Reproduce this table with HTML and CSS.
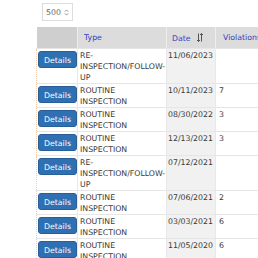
FILE: index.html
```html
<!DOCTYPE html>
<html>
<head>
<meta charset="utf-8">
<link rel="stylesheet" href="styles.css">
</head>
<body>
<div class="page">
  <div class="toolbar">
    <div class="select">500 <svg class="chev" width="5" height="7" viewBox="0 0 5 7"><path d="M0.8 2.6 L2.5 0.9 L4.2 2.6 M0.8 4.4 L2.5 6.1 L4.2 4.4" fill="none" stroke="#888" stroke-width="0.9"/></svg></div>
  </div>
  <table class="grid">
    <colgroup>
      <col class="w-btn"><col class="w-type"><col class="w-date"><col class="w-viol">
    </colgroup>
    <thead>
      <tr>
        <th class="c-btn"></th>
        <th class="c-type"><a>Type</a></th>
        <th class="c-date"><a>Date</a><svg class="sort" width="6" height="9" viewBox="0 0 6 9"><path d="M1.5 0.5 V8.5 M0 7 L1.5 8.5 L3 7 M4.5 8.5 V0.5 M3 2 L4.5 0.5 L6 2" fill="none" stroke="#555" stroke-width="1"/></svg></th>
        <th class="c-viol"><a>Violations</a></th>
      </tr>
    </thead>
    <tbody>
      <tr><td class="c-btn"><span class="btn">Details</span></td><td class="c-type">RE-<br>INSPECTION/FOLLOW-<br>UP</td><td class="c-date">11/06/2023</td><td class="c-viol"></td></tr>
      <tr><td class="c-btn"><span class="btn">Details</span></td><td class="c-type">ROUTINE<br>INSPECTION</td><td class="c-date">10/11/2023</td><td class="c-viol">7</td></tr>
      <tr><td class="c-btn"><span class="btn">Details</span></td><td class="c-type">ROUTINE<br>INSPECTION</td><td class="c-date">08/30/2022</td><td class="c-viol">3</td></tr>
      <tr><td class="c-btn"><span class="btn">Details</span></td><td class="c-type">ROUTINE<br>INSPECTION</td><td class="c-date">12/13/2021</td><td class="c-viol">3</td></tr>
      <tr><td class="c-btn"><span class="btn">Details</span></td><td class="c-type">RE-<br>INSPECTION/FOLLOW-<br>UP</td><td class="c-date">07/12/2021</td><td class="c-viol"></td></tr>
      <tr><td class="c-btn"><span class="btn">Details</span></td><td class="c-type">ROUTINE<br>INSPECTION</td><td class="c-date">07/06/2021</td><td class="c-viol">2</td></tr>
      <tr><td class="c-btn"><span class="btn">Details</span></td><td class="c-type">ROUTINE<br>INSPECTION</td><td class="c-date">03/03/2021</td><td class="c-viol">6</td></tr>
      <tr><td class="c-btn"><span class="btn">Details</span></td><td class="c-type">ROUTINE<br>INSPECTION</td><td class="c-date">11/05/2020</td><td class="c-viol">6</td></tr>
    </tbody>
  </table>
</div>
</body>
</html>
```
FILE: styles.css
```css
html, body {
  margin: 0;
  padding: 0;
  overflow: hidden;
  background: #fff;
}
.page {
  width: 320px;
  font-family: "DejaVu Sans", Verdana, sans-serif;
  font-size: 7.8px;
  color: #3a3a3a;
}
.toolbar {
  padding: 3px 0 0 42px;
  height: 27px;
  box-sizing: border-box;
}
.select {
  display: inline-flex;
  align-items: center;
  gap: 3px;
  height: 18px;
  padding: 0 3px 0 3px;
  border: 1px solid #ddd;
  box-sizing: border-box;
  color: #666;
  font-size: 7.8px;
}
.grid {
  margin-left: 36px;
  border-collapse: collapse;
  table-layout: fixed;
  width: 240px;
}
.w-btn { width: 41px; }
.w-type { width: 89px; }
.w-date { width: 49px; }
.w-viol { width: 61px; }
.grid th {
  height: 21px;
  padding: 0 0 0 6px;
  text-align: left;
  font-weight: normal;
  background: #dcdcdc;
  vertical-align: middle;
  white-space: nowrap;
  border-left: 1px solid #eee;
  overflow: hidden;
}
.grid th a {
  color: #3b3bc0;
}
.grid th.c-btn {
  background: #cfcfcf;
  border-left: none;
}
.grid th.c-date {
  padding-left: 5px;
}
.grid th.c-viol {
  padding-left: 7px;
}
.sort {
  margin-left: 6px;
  vertical-align: -1px;
}
.grid td {
  vertical-align: top;
  line-height: 11px;
  padding: 1px 0 0 2px;
  border-top: 1px solid #e6e6e6;
  border-left: 1px solid #e8e8e8;
  height: 22px;
  white-space: nowrap;
}
.grid td.c-btn {
  padding: 1px 0 0 1px;
  border-left: 1px dotted #f1cfae;
}
.grid td.c-date {
  background: #f1f1f1;
  padding-left: 1px;
}
.grid td.c-viol {
  padding-left: 3px;
}
.btn {
  display: block;
  width: 39px;
  height: 17px;
  line-height: 17px;
  text-align: center;
  background: #2f70b2;
  border: 1px solid #285f98;
  box-sizing: border-box;
  border-radius: 3px;
  color: #fff;
  font-size: 7.8px;
  margin-top: 1px;
}
```
